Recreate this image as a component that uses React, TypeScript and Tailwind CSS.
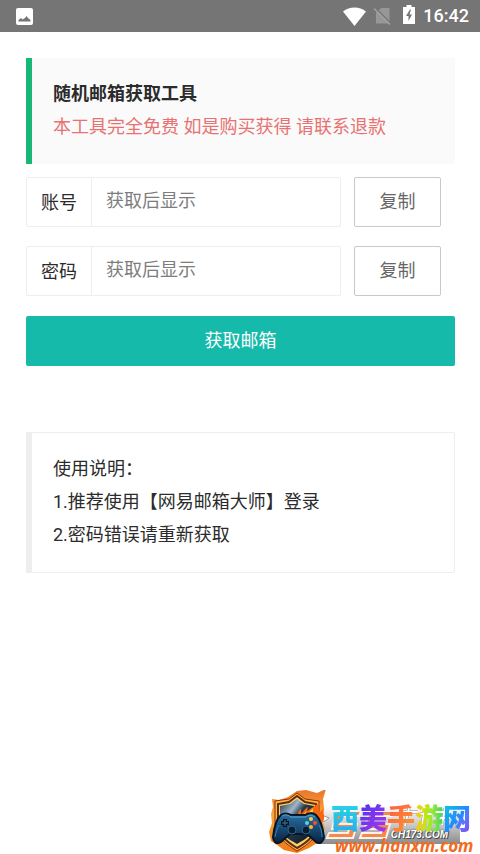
import { useState } from "react";

function StatusBar() {
  return (
    <header className="flex h-8 items-center justify-between bg-[#757575] pr-[11px] pl-4 text-white">
      <svg className="size-[17px]" viewBox="0 0 17 17" aria-hidden="true">
        <rect width="17" height="17" rx="2" fill="white" />
        <path d="M2.500 13.500V12L5 10l1.500 1.500L9 10l1.500-2L12 10l2.500 2v1.500Z" fill="#757575" />
      </svg>
      <div className="flex items-center">
        <svg className="h-[19px] w-[23px]" viewBox="0 0 23 19" fill="white" aria-hidden="true">
          <path d="M0 4.500C6.500-.8 16.500-.8 23 4.500L11.500 19Z" />
        </svg>
        <svg className="ml-2 h-[18px] w-[17px]" viewBox="0 0 17 18" aria-hidden="true">
          <path d="M7 1h7.500q1 0 1 1v14.500H2V6Z" fill="#979797" />
          <path d="m1 .5 16 16" stroke="#757575" strokeWidth="1.500" />
          <path d="m0 1.500 16 16" stroke="#a2a2a2" strokeWidth="1.500" />
        </svg>
        <svg className="mb-[3px] ml-3 h-[19px] w-3" viewBox="0 0 12 19" aria-hidden="true">
          <path d="M3.500 0h5v2H12v17H0V2h3.500Z" fill="white" />
          <path d="M7 4.500 3 11h2.500v5L9 9.500H6.500L8 4.500Z" fill="#757575" />
        </svg>
        <time className="ml-2 font-[Roboto,sans-serif] text-lg leading-8 font-medium">16:42</time>
      </div>
    </header>
  );
}

function Field({ id, label }: { id: string; label: string }) {
  const [value, setValue] = useState("");
  return (
    <div className="flex h-[50px] gap-[13px] pr-[14px]">
      <div className="flex min-w-0 flex-1 rounded-xs border border-[#eee]">
        <label htmlFor={id} className="w-[65px] shrink-0 border-r border-[#eee] text-center leading-[50px]">
          {label}
        </label>
        <input
          id={id}
          type="text"
          value={value}
          onChange={(e) => setValue(e.target.value)}
          placeholder="获取后显示"
          className="min-w-0 flex-1 px-[14px] pb-[2px] outline-none placeholder:text-[#7d7d7d]"
        />
      </div>
      <button
        type="button"
        onClick={() => navigator.clipboard?.writeText(value)}
        className="w-[87px] rounded-xs border border-[#c9c9c9] text-[#666]"
      >
        复制
      </button>
    </div>
  );
}

function GamepadShield() {
  return (
    <svg className="h-16 w-[60px] shrink-0" viewBox="0 0 60 64" aria-hidden="true">
      <defs>
        <linearGradient id="fire" x1="0" y1="0" x2="0" y2="1">
          <stop offset="0" stopColor="#e9752a" />
          <stop offset=".4" stopColor="#f9a63c" />
          <stop offset="1" stopColor="#ef7a16" />
        </linearGradient>
        <linearGradient id="steel" x1="0" y1="0" x2="1" y2="1">
          <stop offset="0" stopColor="#1e2d3c" />
          <stop offset=".3" stopColor="#9db6c8" />
          <stop offset=".45" stopColor="#24394c" />
          <stop offset="1" stopColor="#0c1722" />
        </linearGradient>
        <linearGradient id="pad" x1="0" y1="0" x2="0" y2="1">
          <stop offset="0" stopColor="#2a74a6" />
          <stop offset=".5" stopColor="#174a75" />
          <stop offset="1" stopColor="#0a2440" />
        </linearGradient>
      </defs>
      <path d="m29 1-9 6-9 3-7-1 1 8-2 7 1 9-3 9 2 9 6 4 7 5 13 3 12-5 8-5 5-6 3-9-3-8 2-12-1-9 3-10-9 4-11-3Z" fill="url(#fire)" />
      <path d="m29 3-8 6-14 2v23c0 12 11 20 22 27 12-7 22-15 22-27V11l-14-2Z" fill="#ffb432" stroke="#8c2f12" />
      <path d="m29 6-8 6-11 2v21c0 10 9 17 19 23 11-6 19-13 19-23V14l-11-2Z" fill="#ffd063" stroke="#5b2b1c" strokeWidth="2" />
      <path d="m29 9-7 5-10 2v19c0 9 8 14 17 19 9-5 17-10 17-19V16l-10-2Z" fill="url(#steel)" />
      <path d="M28 28c3-4 1-6 5-9v5c3-2 3-5 7-7l-1 4c4-2 7-5 14-9-3 4-4 7-1 10l4-4c-2 5 2 8-1 14l-10-4Z" fill="#f9650f" />
      <path d="M34 28c0-3 2-4 4-6v4l7-8c-1 4 2 6 1 11Z" fill="#ffd83d" />
      <path d="M13 25c4-3 7-1 10 0h14c4-2 7-3 11 0 5 5 7 14 8 22 0 4-4 8-8 5l-9-8H22l-9 8c-5 3-8-1-8-5 1-9 3-18 8-22Z" fill="url(#pad)" stroke="#08162a" strokeWidth="2" />
      <path d="M14 26c4-2 6-1 9 1h14c4-2 7-2 10 0" fill="none" stroke="#5aa7cc" />
      <path d="M17 29v8M13 33h8" stroke="#071422" strokeWidth="4" />
      <path d="M17 30v6M14 33h6" stroke="#447895" />
      <circle cx="24" cy="40" r="4" fill="#0b1d33" stroke="#2a668c" />
      <circle cx="38" cy="40" r="4" fill="#0b1d33" stroke="#2a668c" />
      <circle cx="43" cy="29" r="2" fill="#f6d04c" />
      <circle cx="39" cy="33" r="2" fill="#5cd4e4" />
      <circle cx="47" cy="33" r="2" fill="#ff4b2c" />
      <circle cx="43" cy="37" r="2" fill="#ffb62d" />
      <path d="M7 47c1-5 2-9 4-12m43 12c0-5-1-9-3-12" fill="none" stroke="#2f86b5" />
    </svg>
  );
}

function SiteMark() {
  return (
    <aside className="absolute right-0 bottom-0 flex h-16 w-[212px]">
      <div className="absolute right-5 bottom-[10px] h-[38px] w-[154px] bg-linear-to-b from-white via-[#c9c9c9] to-[#8b8b8b]">
        <svg className="size-full" viewBox="0 0 154 38" fill="none" aria-hidden="true">
          <path d="M4 12q8-6 19 0-7 8-19 0Z" fill="white" stroke="#999" />
          <path d="M30 5h25l-2 5H36l-2 8h17l-4 14H21l2-5h19l1-4H26l4-18Z" fill="#f08a50" stroke="#fff1e6" strokeWidth="2" />
          <path d="M63 5h25l-2 5H69l-2 8h17l-4 14H54l2-5h19l1-4H59l4-18Z" fill="#f08a50" stroke="#fff1e6" strokeWidth="2" />
          <path d="M96 6h16M103 2l-4 18m15-12h12m-7-5-3 15m15-12h13m-12 6h12m-5-10-3 17" stroke="#8a8a8a" strokeWidth="3" />
          <path d="M96 6h16M103 2l-4 18m15-12h12m-7-5-3 15m15-12h13m-12 6h12m-5-10-3 17" stroke="white" strokeWidth="2" />
        </svg>
        <span className="absolute right-3 bottom-1 font-['Liberation_Sans',sans-serif] text-[10px] leading-[10px] font-bold text-white italic [text-shadow:0_0_2px_#333,1px_1px_0_#555]">
          CH173.COM
        </span>
      </div>
      <div className="relative flex w-full">
        <GamepadShield />
        <div className="flex flex-1 flex-col pt-3 pl-[3px]">
          <p className="flex text-[28px] leading-9 font-black text-transparent">
            <span className="bg-linear-to-b from-[#28d5e8] to-[#23a9ed] bg-clip-text">西</span>
            <span className="bg-linear-to-br from-[#4430ee] to-[#b52df5] bg-clip-text">美</span>
            <span className="bg-linear-to-br from-[#ff5443] to-[#ff9e17] bg-clip-text">手</span>
            <span className="bg-linear-to-r from-[#ffc414] via-[#a9ed12] to-[#25d85c] bg-clip-text">游</span>
            <span className="bg-linear-to-br from-[#18cddd] via-[#2288ff] to-[#8c2df2] bg-clip-text">网</span>
          </p>
          <p className="pl-1 font-['Open_Sans',sans-serif] text-[17px] leading-4 font-bold text-[#f36b1c] italic">
            www.hanxm.com
          </p>
        </div>
      </div>
    </aside>
  );
}

export default function App() {
  return (
    <div className="relative min-h-screen bg-white font-[Roboto,'Noto_Sans_CJK_SC',sans-serif] text-lg text-[#2b2b2b]">
      <StatusBar />
      <main className="pt-[26px] pr-[25px] pb-20 pl-[26px]">
        <section className="mb-[13px] rounded-r-xs border-l-6 border-[#16b777] bg-[#fafafa] px-[21px] pt-[19px] pb-[21px] leading-[33px]">
          <h1 className="font-bold">随机邮箱获取工具</h1>
          <p className="text-[#e87272]">本工具完全免费 如是购买获得 请联系退款</p>
        </section>
        <form className="flex flex-col" onSubmit={(e) => e.preventDefault()}>
          <div className="mb-5 flex flex-col gap-[19px]">
            <Field id="account" label="账号" />
            <Field id="password" label="密码" />
          </div>
          <button type="submit" className="h-[50px] rounded-xs bg-[#16baaa] text-white">
            获取邮箱
          </button>
        </form>
        <section className="mt-[66px] rounded-r-xs border border-l-6 border-[#eee] px-[21px] pt-[19px] pb-[21px] leading-[33px]">
          <p>使用说明：</p>
          <p>1.推荐使用【网易邮箱大师】登录</p>
          <p>2.密码错误请重新获取</p>
        </section>
      </main>
      <SiteMark />
    </div>
  );
}
